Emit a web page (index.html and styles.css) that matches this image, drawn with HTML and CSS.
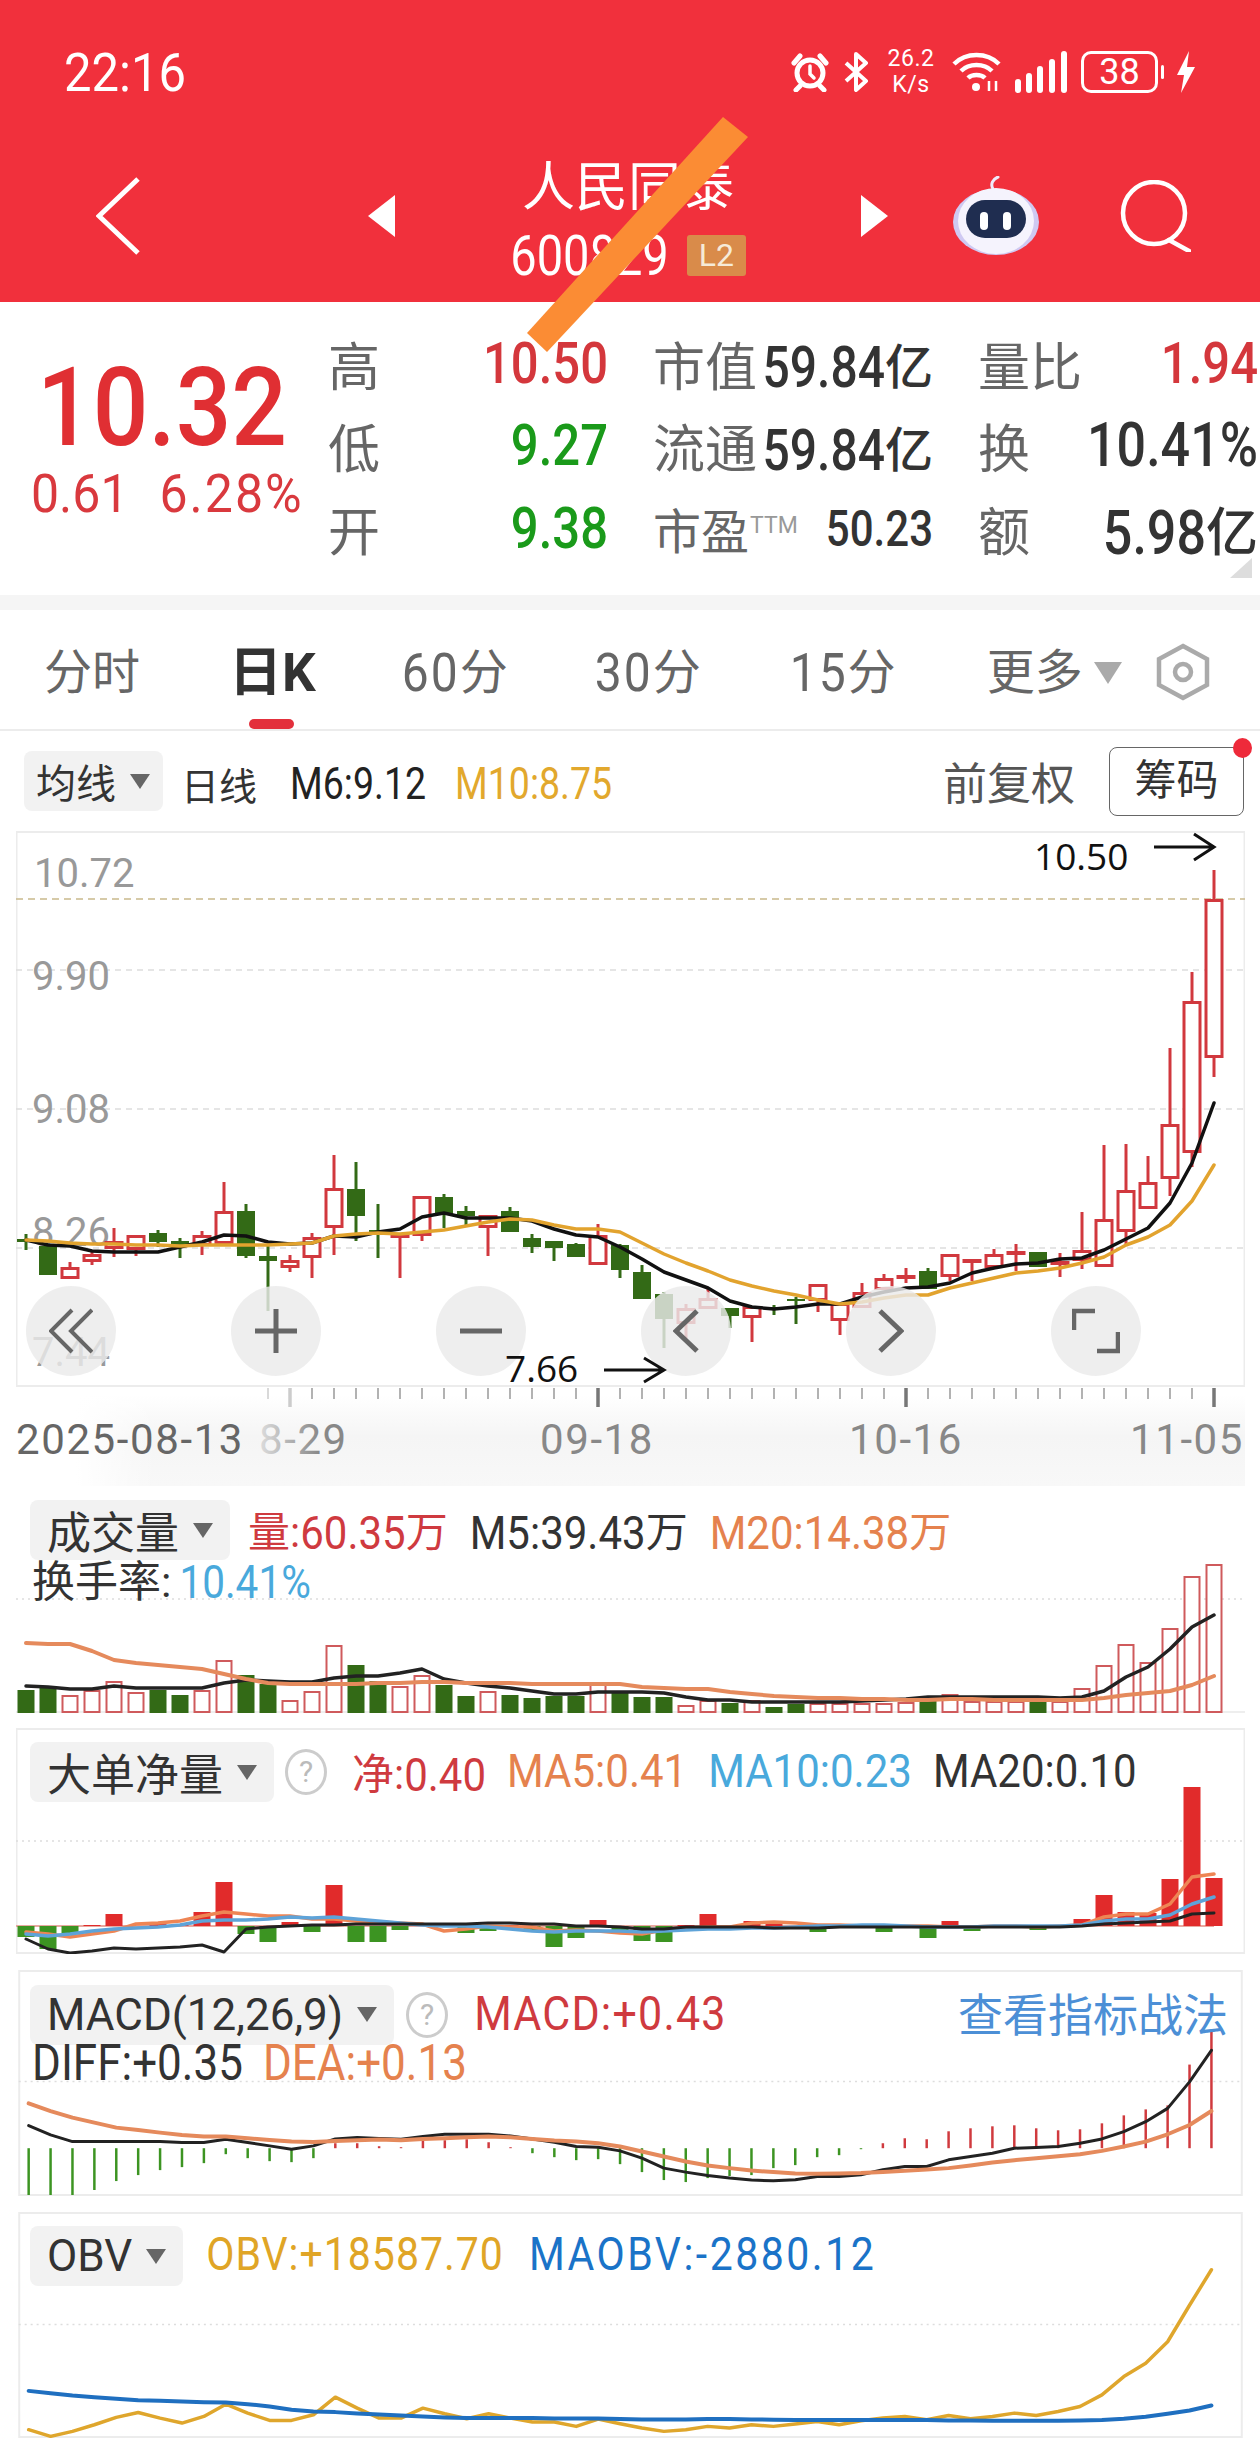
FILE: index.html
```html
<!DOCTYPE html>
<html lang="zh-CN">
  <head>
    <meta charset="UTF-8" />
    <title>人民同泰</title>
    <link rel="stylesheet" href="styles.css">
  </head>
  <body>
    <div class="page">
      <header class="top">
        <div class="status">
          <span class="clock">22:16</span>
          <div class="status-icons">
            <svg width="38" height="40" viewBox="0 0 38 40" fill="none" stroke="#fff" stroke-width="5" stroke-linecap="round">
              <circle cx="19" cy="21" r="13" />
              <path d="M19 14v8l4 4" stroke-width="3.5" />
              <path d="M3 11l6-7M35 11l-6-7M9 34l-4 4M29 34l4 4" />
            </svg>
            <svg width="27" height="40" viewBox="0 0 27 40" fill="none" stroke="#fff" stroke-width="4" stroke-linejoin="round">
              <path d="M3 11l20 18-10 9V2l10 9L3 29" />
            </svg>
            <div class="speed"><span>26.2</span><span>K/s</span></div>
            <svg width="49" height="42" viewBox="0 0 49 42" fill="none" stroke="#fff" stroke-width="4.5">
              <path d="M2 13c12-12 33-12 45 0M9 20c8-8 23-8 31 0M16 27c4-4 13-4 17 0" />
              <circle cx="24" cy="36" r="4" fill="#fff" stroke="none" />
              <path d="M37 30v10M44 30v10" stroke-width="2.5" />
            </svg>
            <svg width="52" height="42" viewBox="0 0 52 42" fill="#fff">
              <rect x="0" y="28" width="6" height="14" rx="3" />
              <rect x="11" y="22" width="6" height="20" rx="3" />
              <rect x="22" y="15" width="6" height="27" rx="3" />
              <rect x="34" y="8" width="6" height="34" rx="3" />
              <rect x="46" y="0" width="6" height="42" rx="3" />
            </svg>
            <div class="battery"><span>38</span></div>
            <svg width="21" height="42" viewBox="0 0 21 42" fill="#fff">
              <path d="M14 0L2 24h7L6 42l14-26h-8z" />
            </svg>
          </div>
        </div>
        <nav class="nav">
          <svg class="back" width="44" height="78" viewBox="0 0 44 78" fill="none" stroke="#fff" stroke-width="5">
            <path d="M42 2L3 39l39 37" />
          </svg>
          <svg class="prev" width="27" height="42" viewBox="0 0 27 42" fill="#fff">
            <path d="M0 21L27 0v42z" />
          </svg>
          <div class="stock">
            <div class="stock-name">人民同泰</div>
            <div class="stock-code"><span class="tall">600829</span><span class="level">L2</span></div>
          </div>
          <svg width="27" height="42" viewBox="0 0 27 42" fill="#fff">
            <path d="M27 21L0 0v42z" />
          </svg>
          <svg class="robot" width="86" height="80" viewBox="0 0 86 80">
            <path d="M40 13c-3-5 0-10 5-12" fill="none" stroke="#efeafa" stroke-width="3" stroke-linecap="round" />
            <ellipse cx="43" cy="46" rx="43" ry="33" fill="#cfc9f2" />
            <ellipse cx="43" cy="45" rx="38" ry="33" fill="#f5f3fd" />
            <rect x="13" y="24" width="60" height="38" rx="19" fill="#1f2d50" />
            <rect x="27" y="36" width="8" height="18" rx="4" fill="#fff" />
            <rect x="50" y="36" width="8" height="18" rx="4" fill="#fff" />
          </svg>
          <svg class="search" width="72" height="72" viewBox="0 0 72 72" fill="none" stroke="#fff" stroke-width="4.5">
            <circle cx="35" cy="33" r="31" />
            <path d="M50 60l20 11" stroke-linecap="round" />
          </svg>
        </nav>
      </header>

      <section class="quote">
        <div class="price-box">
          <div class="price">10.32</div>
          <div class="change"><span class="tall-c">0.61</span><span class="tall-c pct">6.28%</span></div>
        </div>
        <div class="quote-grid">
          <div class="cell"><span class="label">高</span><span class="value red"><span class="tall">10.50</span></span></div>
          <div class="cell"><span class="label">市值</span><span class="value mid"><span class="tall">59.84</span>亿</span></div>
          <div class="cell"><span class="label">量比</span><span class="value red"><span class="tall">1.94</span></span></div>
          <div class="cell"><span class="label">低</span><span class="value green"><span class="tall">9.27</span></span></div>
          <div class="cell"><span class="label">流通</span><span class="value mid"><span class="tall">59.84</span>亿</span></div>
          <div class="cell"><span class="label">换</span><span class="value wide"><span class="tall">10.41%</span></span></div>
          <div class="cell"><span class="label">开</span><span class="value green"><span class="tall">9.38</span></span></div>
          <div class="cell"><span class="label label-sm">市盈<sup class="ttm">TTM</sup></span><span class="value small"><span class="tall">50.23</span></span></div>
          <div class="cell"><span class="label">额</span><span class="value wide"><span class="tall">5.98</span>亿</span></div>
        </div>
        <div class="corner"></div>
      </section>
      <div class="band"></div>

      <div class="tabs">
        <span class="tab tab-1">分时</span>
        <span class="tab tab-2 active">日K</span>
        <span class="tab tab-3"><i>60</i>分</span>
        <span class="tab tab-4"><i>30</i>分</span>
        <span class="tab tab-5"><i>15</i>分</span>
        <span class="tab tab-6">更多<b class="caret-lg"></b></span>
        <svg class="gear" width="56" height="58" viewBox="0 0 56 58" fill="none" stroke="#aaa" stroke-width="4.5">
          <path d="M28 3l24 13v26L28 55 4 42V16z" />
          <circle cx="28" cy="29" r="8" />
        </svg>
      </div>

      <div class="kline-head">
        <span class="chip chip-sm">均线<b class="caret"></b></span>
        <span class="kind">日线</span>
        <span class="ma"><span class="tall">M6:9.12</span></span>
        <span class="ma gold"><span class="tall">M10:8.75</span></span>
        <span class="adjust">前复权</span>
        <span class="chouma">筹码</span>
      </div>

      <section class="panel panel-kline">
        <svg id="kline" class="plot" viewBox="16 832 1229 556"></svg>
        <div class="chart-btns">
          <span class="round-btn"><svg width="44" height="46" viewBox="0 0 44 46" fill="none" stroke="#666" stroke-width="4"><path d="M23 2L2 23l21 21M43 2L22 23l21 21" /></svg></span>
          <span class="round-btn"><svg width="44" height="44" viewBox="0 0 44 44" fill="none" stroke="#666" stroke-width="5"><path d="M22 0v44M1 22h42" /></svg></span>
          <span class="round-btn"><svg width="44" height="44" viewBox="0 0 44 44" fill="none" stroke="#666" stroke-width="5"><path d="M1 22h42" /></svg></span>
          <span class="round-btn"><svg width="26" height="44" viewBox="0 0 26 44" fill="none" stroke="#666" stroke-width="5"><path d="M24 2L3 22l21 20" /></svg></span>
          <span class="round-btn"><svg width="26" height="44" viewBox="0 0 26 44" fill="none" stroke="#666" stroke-width="5"><path d="M2 2l21 20L2 42" /></svg></span>
          <span class="round-btn"><svg width="48" height="46" viewBox="0 0 48 46" fill="none" stroke="#666" stroke-width="4.500"><path d="M2 22V3h21M46 24v19H25" /></svg></span>
        </div>
        <svg id="notes" class="plot" viewBox="16 832 1229 556"></svg>
        <span class="note note-high">10.50</span>
        <span class="note note-low">7.66</span>
      </section>

      <svg id="axis" class="axis" viewBox="16 1388 1229 99"></svg>

      <section class="panel panel-vol">
        <svg id="vol" class="plot" viewBox="16 1487 1229 227"></svg>
        <div class="legend">
          <span class="chip">成交量<b class="caret"></b></span>
          <span class="red-dim">量:<span class="tall-s">60.35</span>万</span>
          <span class="dark"><span class="tall-s">M5:39.43</span>万</span>
          <span class="orange"><span class="tall-s">M20:14.38</span>万</span>
        </div>
        <div class="legend-sub"><span class="dark">换手率:</span><span class="tall-s sky rate">10.41%</span></div>
      </section>

      <section class="panel panel-big">
        <svg id="big" class="plot" viewBox="16 1729 1229 226"></svg>
        <div class="legend legend-net">
          <span class="chip">大单净量<b class="caret"></b></span>
          <span class="help">?</span>
          <span class="red-dim">净:<span class="tall-s">0.40</span></span>
          <span class="tall-s orange">MA5:0.41</span>
          <span class="tall-s sky">MA10:0.23</span>
          <span class="tall-s dark">MA20:0.10</span>
        </div>
      </section>

      <section class="panel panel-big">
        <svg id="macd" class="plot" viewBox="16 1971 1229 227"></svg>
        <div class="legend legend-wide">
          <span class="chip">MACD(12,26,9)<b class="caret"></b></span>
          <span class="help">?</span>
          <span class="tall-s red-dim">MACD:+0.43</span>
          <span class="link">查看指标战法</span>
        </div>
        <div class="legend-sub legend-diff"><span class="tall-s dark">DIFF:+0.35</span><span class="tall-s orange">DEA:+0.13</span></div>
      </section>

      <section class="panel panel-big">
        <svg id="obv" class="plot" viewBox="16 2213 1229 227"></svg>
        <div class="legend legend-obv">
          <span class="chip">OBV<b class="caret"></b></span>
          <span class="tall-s amber">OBV:+18587.70</span>
          <span class="tall-s blue obv-ma">MAOBV:-2880.12</span>
        </div>
      </section>

      <svg class="slash" width="240" height="250" viewBox="0 0 240 250">
        <path d="M203 0l25 20L27 235 7 216z" fill="#fb8c34" />
      </svg>
    </div>
    <script src="chart.js"></script>
  </body>
</html>
```

FILE: styles.css
```css
body {
  margin: 0;
  padding: 0;
  background: #fff;
  font-family: Roboto, "Noto Sans CJK SC", sans-serif;
  color: #333;
}

.page {
  position: relative;
  width: 1260px;
  height: 2448px;
  overflow: hidden;
}

/* header */
.top {
  height: 302px;
  background: #f1303c;
  color: #fff;
}

.status {
  display: flex;
  justify-content: space-between;
  align-items: center;
  height: 144px;
  padding: 0 64px;
}

.clock {
  font-size: 49px;
  display: inline-block;
  transform: scaleY(1.1);
}

.status-icons {
  display: flex;
  align-items: center;
  gap: 14px;
}

.speed {
  display: flex;
  flex-direction: column;
  align-items: center;
  width: 54px;
  font-size: 23px;
  line-height: 26px;
  letter-spacing: 0.5px;
}

.battery {
  position: relative;
  width: 71px;
  height: 36px;
  margin-right: 3px;
  border: 3px solid #fff;
  border-radius: 10px;
  text-align: center;
  font-size: 36px;
  line-height: 37px;
}

.battery::after {
  content: "";
  position: absolute;
  right: -9px;
  top: 11px;
  width: 3px;
  height: 14px;
  border-radius: 2px;
  background: #fff;
}

.nav {
  display: flex;
  align-items: center;
  height: 144px;
  padding-left: 96px;
  padding-bottom: 14px;
}

.back {
  margin-right: 228px;
}

.stock {
  width: 466px;
  text-align: center;
}

.stock-name {
  font-size: 53px;
  line-height: 62px;
}

.stock-code {
  display: flex;
  justify-content: center;
  align-items: center;
  gap: 18px;
  margin-top: 16px;
  font-size: 47px;
  line-height: 41px;
}

.level {
  width: 59px;
  height: 41px;
  background: #d98b4a;
  border-radius: 3px;
  font-size: 32px;
  color: #f6ead8;
}

.robot {
  margin-left: 65px;
}

.search {
  margin-left: 80px;
}

.slash {
  position: absolute;
  left: 520px;
  top: 117px;
}

/* quote block */
.quote {
  position: relative;
  display: flex;
  height: 293px;
}

.price-box {
  width: 331px;
  flex: none;
}

.price {
  margin: 64px 0 0 37px;
  font-size: 98px;
  font-weight: 500;
  line-height: 84px;
  color: #e02f33;
  transform: scaleY(1.12);
  transform-origin: left center;
}

.change {
  display: flex;
  gap: 31px;
  margin: 16px 0 0 31px;
  font-size: 50px;
  line-height: 56px;
  color: #d9393e;
}

.pct {
  letter-spacing: 2px;
}

.tall {
  display: inline-block;
  transform: scaleY(1.18);
}

.tall-c {
  display: inline-block;
  transform: scaleY(1.08);
}

.tall-s {
  display: inline-block;
  transform: scaleY(1.12);
}

.quote-grid {
  display: grid;
  grid-template-columns: repeat(3, 277px);
  grid-auto-rows: 82.5px;
  column-gap: 48px;
  padding-top: 20px;
}

.cell {
  display: flex;
  justify-content: space-between;
  align-items: center;
}

.label {
  margin-left: -3px;
  font-size: 52px;
  color: #666;
}

.label-sm {
  font-size: 48px;
}

.ttm {
  margin-left: 1px;
  font-size: 23px;
  color: #999;
  vertical-align: 16px;
  line-height: 0;
}

.value {
  font-size: 49px;
  font-weight: 500;
  color: #333;
  white-space: nowrap;
}

.value.mid {
  font-size: 48px;
}

.value.small {
  font-size: 42px;
}

.value.wide {
  font-size: 52px;
}

.red {
  color: #d4373c;
}

.green {
  color: #1a9a1a;
}

.corner {
  position: absolute;
  right: 8px;
  bottom: 17px;
  width: 0;
  height: 0;
  border-left: 22px solid transparent;
  border-bottom: 20px solid #ddd;
}

.band {
  height: 15px;
  background: #f5f5f5;
}

/* period tabs */
.tabs {
  position: relative;
  display: flex;
  align-items: center;
  height: 121px;
  box-sizing: border-box;
  border-bottom: 2px solid #ececec;
  font-size: 48px;
  color: #666;
}

.tab {
  display: flex;
  align-items: center;
  line-height: 60px;
  margin-top: 6px;
}

.tab i {
  font-style: normal;
  display: inline-block;
  letter-spacing: 2px;
  transform: scaleY(1.1);
}

.tab-1 {
  margin-left: 44px;
}

.tab-2 {
  margin-left: 89px;
  font-size: 53px;
}

.tab-3 {
  margin-left: 86px;
}

.tab-4 {
  margin-left: 87px;
}

.tab-5 {
  margin-left: 89px;
}

.tab-6 {
  margin-left: 91px;
}

.active {
  font-weight: 700;
  color: #333;
}

.active::after {
  content: "";
  position: absolute;
  left: 249px;
  bottom: 0;
  width: 45px;
  height: 10px;
  border-radius: 5px;
  background: #e3303c;
}

.caret-lg {
  width: 0;
  height: 0;
  margin-left: 11px;
  border-left: 14px solid transparent;
  border-right: 14px solid transparent;
  border-top: 22px solid #aaa;
}

.gear {
  margin-left: 33px;
  margin-top: 4px;
}

/* chart header */
.kline-head {
  display: flex;
  align-items: center;
  height: 100px;
  padding: 0 16px 0 24px;
  box-sizing: border-box;
}

.chip {
  display: inline-flex;
  align-items: center;
  flex: none;
  height: 60px;
  padding: 0 17px;
  background: #f2f2f2;
  border-radius: 8px;
  font-size: 44px;
  color: #333;
}

.chip-sm {
  padding: 0 13px 0 12px;
  font-size: 40px;
}

.caret {
  width: 0;
  height: 0;
  margin-left: 14px;
  border-left: 10px solid transparent;
  border-right: 10px solid transparent;
  border-top: 15px solid #666;
}

.kind {
  margin-left: 18px;
  margin-top: 5px;
  font-size: 38px;
}

.ma {
  margin-left: 33px;
  margin-top: 6px;
  font-size: 37.500px;
  color: #222;
}

.gold {
  margin-left: 29px;
  color: #e2a82d;
}

.adjust {
  margin-left: auto;
  font-size: 44px;
  color: #555;
}

.chouma {
  position: relative;
  width: 135px;
  height: 69px;
  margin-left: 34px;
  box-sizing: border-box;
  border: 1.5px solid #666;
  border-radius: 8px;
  text-align: center;
  font-size: 42px;
  line-height: 66px;
}

.chouma::after {
  content: "";
  position: absolute;
  right: -9px;
  top: -10px;
  width: 19px;
  height: 20px;
  border-radius: 50%;
  background: #ee2a3a;
}

/* chart panels */
.panel {
  position: relative;
  margin-left: 16px;
  width: 1229px;
  box-sizing: border-box;
}

.panel-kline {
  height: 556px;
}

.panel-vol {
  height: 227px;
}

.panel-big {
  height: 226px;
  margin-top: 16px;
}

.panel-vol + .panel-big {
  margin-top: 15px;
}

.plot {
  position: absolute;
  left: 0;
  top: 0;
  width: 100%;
  height: 100%;
}

.axis {
  display: block;
  margin-left: 16px;
  width: 1229px;
  height: 99px;
  background: linear-gradient(to right, #fff 60px, rgba(255, 255, 255, 0) 140px), linear-gradient(#fff 8%, #f5f5f5 50%, #f8f8f8);
}

.chart-btns {
  position: absolute;
  left: 10px;
  top: 455px;
  display: flex;
  gap: 115px;
}

.round-btn {
  display: flex;
  justify-content: center;
  align-items: center;
  width: 90px;
  height: 90px;
  border-radius: 50%;
  background: rgba(234, 234, 234, 0.82);
}

.note {
  position: absolute;
  font-family: "Open Sans", Roboto, sans-serif;
  font-size: 37px;
  line-height: 44px;
  color: #111;
}

.note-high {
  left: 1018px;
  top: 3px;
}

.note-low {
  left: 489px;
  top: 515px;
}

.legend {
  position: relative;
  display: flex;
  align-items: center;
  gap: 22px;
  padding: 14px 17px 0 14px;
  font-size: 42px;
  white-space: nowrap;
}

.legend > span:not(.chip):not(.help) {
  margin-top: -4px;
}

.legend .chip {
  margin-right: -4px;
}

.legend-net {
  gap: 21px;
}

.legend-sub {
  position: relative;
  display: flex;
  gap: 20px;
  padding-left: 16px;
  font-size: 43px;
  line-height: 44px;
}

.panel-vol .legend-sub {
  gap: 8px;
}

.rate {
  font-size: 40.500px;
}

.legend-wide {
  font-size: 43px;
  letter-spacing: 1.2px;
}

.legend-wide .chip,
.legend-obv .chip {
  letter-spacing: 0;
  font-size: 44px;
}

.legend-diff {
  margin-top: -4px;
  font-size: 44px;
}

.legend-obv {
  font-size: 41px;
  letter-spacing: 1px;
}

.legend-obv .chip {
  margin-right: 1px;
}

.obv-ma {
  margin-left: 3px;
  letter-spacing: 2.5px;
}

.help {
  flex: none;
  width: 36px;
  height: 40px;
  margin: 0 4px 0 -6px;
  border: 3px solid #ccc;
  border-radius: 50%;
  text-align: center;
  font-size: 30px;
  line-height: 40px;
  letter-spacing: 0;
  color: #bbb;
}

.link {
  margin-left: auto;
  font-size: 45px;
  letter-spacing: 0;
  color: #4c8fd6;
}

.red-dim {
  color: #cf3a3f;
}

.dark {
  color: #333;
}

.orange {
  color: #e5824e;
}

.sky {
  color: #49a9dc;
}

.amber {
  color: #e0a526;
}

.blue {
  color: #1a73c8;
}

/* svg text */
.price-label {
  font-size: 40px;
  fill: #999;
}

.date {
  font-size: 42px;
  letter-spacing: 1.6px;
  fill: #888;
}

.date-fade {
  fill: url(#fade);
}

.date-first {
  fill: #666;
}
```

FILE: chart.js
```js
(function() {
  const NS = "http://www.w3.org/2000/svg";
  const RED = "#d1383e";
  const GREEN = "#336a16";

  function x(i) {
    return 26 + 22 * i;
  }

  function add(svg, tag, attrs, text) {
    const el = document.createElementNS(NS, tag);
    Object.keys(attrs).forEach(function(k) {
      el.setAttribute(k, attrs[k]);
    });
    if (text) el.textContent = text;
    svg.appendChild(el);
    return el;
  }

  function line(svg, ys, color, width) {
    const pts = ys.map(function(y, i) {
      return x(i) + "," + y;
    });
    add(svg, "polyline", {
      points: pts.join(" "),
      fill: "none",
      stroke: color,
      "stroke-width": width,
      "stroke-linejoin": "round",
      "stroke-linecap": "round"
    });
  }

  function grid(svg, y, color, dash) {
    add(svg, "line", {
      x1: 16, x2: 1245, y1: y, y2: y,
      stroke: color,
      "stroke-width": 1.5,
      "stroke-dasharray": dash
    });
  }

  function frame(svg, top, bottom) {
    add(svg, "rect", {
      x: 16.5, y: top + 1, width: 1228, height: bottom - top - 2,
      fill: "#fff", stroke: "#ececec", "stroke-width": 2
    });
  }

  // high, low, body top, body bottom, r = hollow red / g = solid green
  const candles = [
    [1235, 1251, 1240, 1243, "g"], [1246, 1276, 1247, 1276, "g"], [1263, 1280, 1268, 1280, "r"],
    [1253, 1266, 1255, 1263, "r"], [1229, 1258, 1242, 1250, "r"], [1236, 1257, 1236, 1251, "r"],
    [1231, 1248, 1234, 1243, "g"], [1239, 1259, 1242, 1246, "g"], [1232, 1256, 1236, 1247, "r"],
    [1183, 1245, 1212, 1245, "r"], [1205, 1259, 1212, 1257, "g"], [1247, 1312, 1257, 1262, "g"],
    [1256, 1273, 1261, 1269, "r"], [1234, 1279, 1238, 1259, "r"], [1156, 1256, 1189, 1229, "r"],
    [1163, 1242, 1190, 1217, "g"], [1205, 1259, 1231, 1234, "g"], [1235, 1279, 1235, 1238, "r"],
    [1197, 1242, 1197, 1237, "r"], [1195, 1229, 1198, 1215, "g"], [1207, 1226, 1212, 1217, "g"],
    [1216, 1257, 1216, 1229, "r"], [1208, 1233, 1212, 1233, "g"], [1235, 1254, 1239, 1248, "g"],
    [1242, 1262, 1242, 1249, "g"], [1244, 1258, 1245, 1258, "g"], [1225, 1266, 1236, 1266, "r"],
    [1245, 1279, 1246, 1271, "g"], [1266, 1300, 1273, 1300, "g"], [1293, 1349, 1295, 1320, "g"],
    [1305, 1340, 1309, 1325, "r"], [1289, 1310, 1299, 1310, "r"], [1309, 1329, 1309, 1317, "g"],
    [1307, 1343, 1307, 1319, "r"], [1306, 1316, 1308, 1310, "g"], [1298, 1325, 1300, 1302, "g"],
    [1285, 1313, 1285, 1302, "r"], [1304, 1336, 1304, 1322, "r"], [1284, 1309, 1293, 1309, "r"],
    [1275, 1291, 1279, 1291, "r"], [1269, 1284, 1276, 1279, "r"], [1269, 1290, 1272, 1290, "g"],
    [1255, 1282, 1255, 1278, "r"], [1260, 1282, 1260, 1263, "r"], [1250, 1269, 1255, 1269, "r"],
    [1245, 1272, 1252, 1256, "r"], [1253, 1268, 1253, 1268, "g"], [1254, 1278, 1262, 1265, "r"],
    [1213, 1270, 1251, 1262, "r"], [1146, 1268, 1220, 1268, "r"], [1145, 1246, 1191, 1233, "r"],
    [1157, 1210, 1183, 1210, "r"], [1049, 1197, 1125, 1180, "r"], [973, 1168, 1002, 1154, "r"],
    [871, 1078, 900, 1059, "r"]
  ];
  const m6 = [1241, 1246, 1247, 1252, 1253, 1253, 1253, 1248, 1243, 1236, 1237, 1243, 1245, 1244, 1237, 1238, 1233, 1230, 1218, 1214, 1219, 1219, 1219, 1222, 1230, 1236, 1238, 1248, 1260, 1273, 1281, 1289, 1302, 1308, 1310, 1308, 1305, 1305, 1298, 1293, 1289, 1288, 1284, 1274, 1269, 1265, 1264, 1260, 1259, 1251, 1240, 1229, 1204, 1164, 1104];
  const m10 = [1241, 1242, 1244, 1245, 1245, 1246, 1246, 1247, 1246, 1246, 1246, 1246, 1245, 1244, 1237, 1235, 1234, 1235, 1233, 1231, 1227, 1223, 1220, 1221, 1226, 1230, 1230, 1233, 1244, 1255, 1264, 1272, 1281, 1287, 1292, 1296, 1301, 1305, 1303, 1299, 1296, 1296, 1289, 1284, 1279, 1274, 1272, 1269, 1264, 1258, 1246, 1238, 1226, 1202, 1166];

  const volTop = [1691, 1688, 1696, 1691, 1682, 1693, 1691, 1696, 1691, 1661, 1676, 1685, 1701, 1692, 1646, 1666, 1682, 1687, 1676, 1686, 1697, 1692, 1696, 1699, 1697, 1697, 1683, 1693, 1698, 1698, 1706, 1701, 1704, 1701, 1708, 1705, 1704, 1704, 1704, 1704, 1703, 1702, 1695, 1702, 1702, 1702, 1703, 1702, 1689, 1666, 1645, 1663, 1629, 1577, 1565];
  const volKind = "ggrrrrggrrggrrrggrrggrggggrgggrrgrggrrrrrgrrrrgrrrrrrrr";
  const volM5 = [1687, 1688, 1690, 1690, 1687, 1689, 1689, 1689, 1689, 1684, 1681, 1682, 1683, 1683, 1679, 1677, 1677, 1674, 1670, 1680, 1684, 1687, 1689, 1692, 1695, 1695, 1693, 1693, 1693, 1694, 1698, 1701, 1701, 1703, 1703, 1703, 1703, 1703, 1702, 1701, 1700, 1698, 1698, 1698, 1698, 1698, 1698, 1699, 1698, 1692, 1678, 1668, 1650, 1628, 1616];
  const volM20 = [1644, 1645, 1645, 1652, 1661, 1664, 1666, 1668, 1670, 1675, 1680, 1684, 1685, 1685, 1685, 1685, 1684, 1684, 1683, 1683, 1684, 1684, 1684, 1685, 1685, 1685, 1685, 1685, 1688, 1689, 1690, 1690, 1693, 1695, 1697, 1698, 1699, 1699, 1700, 1700, 1701, 1701, 1700, 1700, 1701, 1701, 1701, 1701, 1701, 1699, 1696, 1694, 1692, 1686, 1677];

  const bigBar = [1938, 1950, 1935, 1926, 1915, 1927, 1925, 1925, 1913, 1883, 1935, 1943, 1923, 1933, 1886, 1943, 1943, 1931, 1925, 1928, 1934, 1932, 1926, 1932, 1948, 1939, 1921, 1935, 1942, 1943, 1926, 1915, 1930, 1922, 1924, 1928, 1933, 1928, 1929, 1933, 1926, 1939, 1922, 1932, 1926, 1929, 1931, 1926, 1920, 1896, 1913, 1914, 1880, 1788, 1879];
  const bigMa5 = [1933, 1935, 1938, 1935, 1932, 1925, 1924, 1922, 1917, 1913, 1915, 1917, 1917, 1920, 1920, 1922, 1923, 1924, 1925, 1932, 1930, 1927, 1928, 1928, 1932, 1931, 1932, 1934, 1935, 1931, 1929, 1928, 1928, 1924, 1923, 1924, 1926, 1926, 1927, 1927, 1927, 1927, 1928, 1928, 1927, 1927, 1928, 1927, 1926, 1918, 1915, 1915, 1905, 1878, 1875];
  const bigMa10 = [1935, 1937, 1935, 1932, 1930, 1929, 1928, 1926, 1922, 1921, 1921, 1920, 1918, 1919, 1918, 1920, 1922, 1924, 1926, 1927, 1927, 1928, 1930, 1932, 1933, 1932, 1932, 1932, 1933, 1932, 1931, 1930, 1930, 1929, 1929, 1928, 1927, 1927, 1926, 1926, 1927, 1928, 1928, 1928, 1927, 1927, 1927, 1927, 1926, 1922, 1920, 1920, 1916, 1905, 1898];
  const bigMa20 = [1940, 1950, 1954, 1952, 1949, 1950, 1949, 1948, 1946, 1953, 1930, 1928, 1927, 1926, 1926, 1925, 1925, 1925, 1925, 1925, 1925, 1924, 1924, 1925, 1925, 1927, 1927, 1928, 1930, 1930, 1928, 1928, 1928, 1928, 1929, 1929, 1929, 1928, 1928, 1928, 1928, 1928, 1928, 1928, 1928, 1928, 1928, 1928, 1927, 1925, 1924, 1923, 1922, 1915, 1914];

  const macdBar = [2197, 2197, 2197, 2192, 2183, 2177, 2172, 2169, 2165, 2156, 2160, 2163, 2164, 2160, 2145, 2145, 2148, 2149, 2142, 2142, 2141, 2144, 2149, 2155, 2159, 2162, 2161, 2166, 2174, 2182, 2184, 2180, 2178, 2177, 2170, 2167, 2159, 2157, 2151, 2145, 2140, 2141, 2133, 2130, 2128, 2127, 2130, 2132, 2131, 2125, 2117, 2111, 2107, 2066, 2033];
  const diff = [472, 500, 520, 520, 520, 520, 520, 523, 523, 513, 523, 533, 543, 533, 512, 508, 511, 513, 505, 498, 498, 498, 503, 512, 522, 535, 537, 548, 570, 600, 612, 622, 630, 636, 638, 635, 625, 625, 620, 605, 595, 595, 575, 565, 555, 540, 538, 535, 525, 512, 490, 460, 420, 340, 245];
  const dea = [405, 428, 448, 463, 478, 485, 493, 500, 505, 505, 510, 515, 520, 521, 518, 516, 514, 516, 512, 510, 507, 505, 507, 512, 517, 520, 525, 535, 550, 565, 580, 592, 600, 607, 612, 616, 617, 616, 615, 612, 608, 604, 600, 592, 583, 576, 570, 564, 558, 548, 535, 520, 498, 470, 428];

  const obvA = [1385, 1405, 1390, 1370, 1348, 1333, 1350, 1365, 1345, 1308, 1335, 1357, 1357, 1340, 1287, 1320, 1350, 1350, 1320, 1337, 1352, 1337, 1350, 1362, 1362, 1375, 1353, 1367, 1380, 1390, 1385, 1375, 1380, 1370, 1375, 1368, 1360, 1370, 1358, 1350, 1345, 1355, 1342, 1352, 1345, 1335, 1342, 1330, 1315, 1280, 1225, 1185, 1120, 1010, 903];
  const obvB = [1268, 1275, 1282, 1287, 1292, 1296, 1298, 1300, 1302, 1303, 1308, 1315, 1325, 1330, 1332, 1336, 1339, 1342, 1345, 1348, 1350, 1350, 1350, 1350, 1351, 1351, 1351, 1353, 1354, 1354, 1354, 1353, 1353, 1354, 1355, 1356, 1356, 1356, 1356, 1356, 1356, 1356, 1357, 1357, 1358, 1358, 1358, 1358, 1357, 1356, 1352, 1346, 1337, 1327, 1312];

  function toPage(ys) {
    return ys.map(function(y) {
      return 1970 + y / 3;
    });
  }

  // price chart
  const kline = document.getElementById("kline");
  frame(kline, 832, 1388);
  grid(kline, 900, "#c9b98c", "7 5");
  [971, 1110, 1249].forEach(function(y) {
    grid(kline, y, "#ddd", "6 5");
  });
  [[34, 888, "10.72"], [32, 991, "9.90"], [32, 1124, "9.08"], [32, 1247, "8.26"], [32, 1367, "7.44"]].forEach(function(l) {
    add(kline, "text", { x: l[0], y: l[1], class: "price-label" }, l[2]);
  });
  candles.forEach(function(c, i) {
    const color = c[4] === "r" ? RED : GREEN;
    const cx = x(i);
    const wick = { stroke: color, "stroke-width": 3 };
    add(kline, "line", Object.assign({ x1: cx, x2: cx, y1: c[0], y2: c[2] }, wick));
    add(kline, "line", Object.assign({ x1: cx, x2: cx, y1: c[3], y2: c[1] }, wick));
    if (c[4] === "r") {
      add(kline, "rect", { x: cx - 8, y: c[2] + 1.5, width: 16, height: Math.max(c[3] - c[2] - 3, 1), fill: "#fff", stroke: color, "stroke-width": 3 });
    } else {
      add(kline, "rect", { x: cx - 9, y: c[2], width: 18, height: c[3] - c[2], fill: color });
    }
  });
  line(kline, m6, "#111", 3.5);
  line(kline, m10, "#e2a32e", 3.5);

  // arrows next to the high and low notes
  const notes = document.getElementById("notes");
  add(notes, "path", { d: "M1154 848h60m-20-13l20 13-20 13", fill: "none", stroke: "#111", "stroke-width": 3 });
  add(notes, "path", { d: "M604 1371h60m-20-12l20 12-20 12", fill: "none", stroke: "#111", "stroke-width": 3 });

  // time axis
  const axis = document.getElementById("axis");
  const defs = add(axis, "defs", {});
  const fade = add(defs, "linearGradient", { id: "fade", gradientUnits: "userSpaceOnUse", x1: 259, x2: 320, y1: 0, y2: 0 });
  add(fade, "stop", { offset: 0, "stop-color": "#ddd" });
  add(fade, "stop", { offset: 1, "stop-color": "#888" });
  for (let i = 11; i <= 54; i++) {
    const major = i === 12 || i === 26 || i === 40 || i === 54;
    add(axis, "line", {
      x1: x(i), x2: x(i), y1: 1389, y2: major ? 1408 : 1400,
      stroke: i < 13 ? "#ccc" : major ? "#777" : "#999",
      "stroke-width": major ? 3.5 : 1.5
    });
  }
  add(axis, "text", { x: 259, y: 1455, class: "date date-fade" }, "8-29");
  add(axis, "text", { x: 16, y: 1455, class: "date date-first" }, "2025-08-13");
  add(axis, "text", { x: 540, y: 1455, class: "date" }, "09-18");
  add(axis, "text", { x: 849, y: 1455, class: "date" }, "10-16");
  add(axis, "text", { x: 1130, y: 1455, class: "date" }, "11-05");

  // volume
  const vol = document.getElementById("vol");
  add(vol, "line", { x1: 16, x2: 1245, y1: 1713, y2: 1713, stroke: "#eee", "stroke-width": 2 });
  grid(vol, 1600, "#ddd", "2 4");
  volTop.forEach(function(top, i) {
    if (volKind[i] === "r") {
      add(vol, "rect", { x: x(i) - 7.5, y: top + 1, width: 15, height: 1713 - top - 1, fill: "#fff", stroke: "#cf5a5c", "stroke-width": 2 });
    } else {
      add(vol, "rect", { x: x(i) - 8.5, y: top, width: 17, height: 1714 - top, fill: GREEN });
    }
  });
  line(vol, volM5, "#222", 3.5);
  line(vol, volM20, "#e58a5c", 4);

  // big order net volume
  const big = document.getElementById("big");
  frame(big, 1729, 1955);
  grid(big, 1842, "#ddd", "2 4");
  add(big, "line", { x1: 16, x2: 1214, y1: 1927, y2: 1927, stroke: "#e9a9a0", "stroke-width": 2 });
  bigBar.forEach(function(y, i) {
    const up = y < 1927;
    add(big, "rect", {
      x: x(i) - 8.5, y: Math.min(y, 1927), width: 17, height: Math.abs(y - 1927),
      fill: up ? "#e12b2b" : "#3c9422"
    });
  });
  line(big, bigMa5, "#ee8554", 3.5);
  line(big, bigMa10, "#5ea3d8", 3.5);
  line(big, bigMa20, "#222", 3);

  // macd
  const macd = document.getElementById("macd");
  frame(macd, 1971, 2198);
  grid(macd, 2083, "#ddd", "2 4");
  macdBar.forEach(function(y, i) {
    add(macd, "line", { x1: x(i), x2: x(i), y1: 2150, y2: y, stroke: y < 2150 ? "#d03a3e" : "#3c9422", "stroke-width": 2.5 });
  });
  line(macd, toPage(diff), "#222", 3);
  line(macd, toPage(dea), "#e58a5c", 4);

  // obv
  const obv = document.getElementById("obv");
  frame(obv, 2213, 2440);
  grid(obv, 2326, "#ddd", "2 4");
  line(obv, toPage(obvA), "#dfa62c", 3.5);
  line(obv, toPage(obvB), "#1f6fc0", 4);
})();
```
